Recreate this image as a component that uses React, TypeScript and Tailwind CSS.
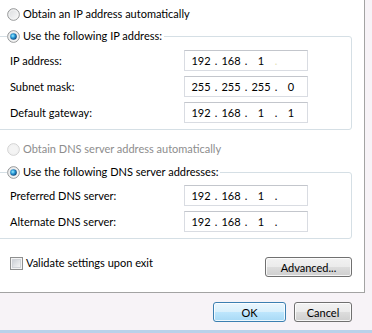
import React from "react";

const font = { fontFamily: 'Lato, "Noto Sans", sans-serif' };

function Radio({ checked = false, disabled = false }: { checked?: boolean; disabled?: boolean }) {
  return (
    <svg width="13" height="13" viewBox="0 0 13 13" className="shrink-0">
      <defs>
        <linearGradient id="rbg" x1="0" y1="0" x2="1" y2="1">
          <stop offset="0" stopColor="#d9dbdd" />
          <stop offset="1" stopColor="#fbfbfb" />
        </linearGradient>
        <radialGradient id="rdot" cx="0.4" cy="0.4" r="0.6">
          <stop offset="0" stopColor="#9ff0ff" />
          <stop offset="0.5" stopColor="#2a9ad8" />
          <stop offset="1" stopColor="#0f4a7e" />
        </radialGradient>
      </defs>
      <circle
        cx="6.5"
        cy="6.5"
        r="5.8"
        fill={disabled ? "#f4f4f4" : "url(#rbg)"}
        stroke={disabled ? "#cfcfcf" : "#8f9192"}
        strokeWidth="1"
      />
      <circle cx="6.5" cy="6.5" r="4.6" fill="none" stroke={disabled ? "#f0f0f0" : "#f6f6f6"} strokeWidth="0.8" />
      {checked && <circle cx="6.5" cy="6.5" r="3.3" fill="url(#rdot)" />}
    </svg>
  );
}

function IpBox({ parts, faintLast = false }: { parts: string[]; faintLast?: boolean }) {
  return (
    <div className="w-[124px] h-[21px] border border-[#d9dce2] border-t-[#c3c6cc] bg-white flex items-center pl-[3px] text-[11px] leading-none text-black">
      {[0, 1, 2, 3].map((i) => (
        <React.Fragment key={i}>
          <span className="w-[26px] text-center">{parts[i] ?? ""}</span>
          {i < 3 && (
            <span className={`w-[4px] text-center ${faintLast && i === 2 ? "text-[#e4dfb8]" : ""}`}>.</span>
          )}
        </React.Fragment>
      ))}
    </div>
  );
}

function Row({ label, parts, faintLast }: { label: string; parts: string[]; faintLast?: boolean }) {
  return (
    <div className="flex items-center justify-between pl-[3px] pr-[43px]">
      <span className="text-black">{label}</span>
      <IpBox parts={parts} faintLast={faintLast} />
    </div>
  );
}

function WinButton({ children, primary = false, className = "" }: { children: React.ReactNode; primary?: boolean; className?: string }) {
  return (
    <button
      className={`h-[20px] rounded-[3px] border text-[11px] leading-none text-black shadow-[inset_0_0_0_1px_rgba(255,255,255,0.8)] ${
        primary
          ? "border-[#3c7fb1] bg-[linear-gradient(#eaf6fd_0%,#d9f0fc_50%,#bee6fd_50%,#a7d9f5_100%)]"
          : "border-[#707070] bg-[linear-gradient(#f2f2f2_0%,#ebebeb_50%,#dddddd_50%,#cfcfcf_100%)]"
      } ${className}`}
    >
      {children}
    </button>
  );
}

export default function App() {
  return (
    <div className="w-[372px] h-[333px] flex flex-col bg-[#f7f3f7] overflow-hidden" style={font}>
      <div className="h-[293px] w-[365px] bg-white border-r border-b border-[#a3a3a3] overflow-hidden flex flex-col pr-[12px] text-[11px] leading-[14px]">
        <div className="flex items-center gap-[3px] pl-[7px] pt-[7px] h-[21px]">
          <Radio />
          <span>Obtain an IP address automatically</span>
        </div>

        <fieldset className="mt-[8px] ml-[-3px] border border-[#d5dfe5] rounded-[3px] pl-[9px] pt-[7px] pb-[6px]">
          <legend className="flex items-center gap-[3px] pr-[2px] h-[14px]">
            <Radio checked />
            <span>Use the following IP address:</span>
          </legend>
          <div className="flex flex-col gap-[5px]">
            <Row label="IP address:" parts={["192", "168", "1", ""]} faintLast />
            <Row label="Subnet mask:" parts={["255", "255", "255", "0"]} />
            <Row label="Default gateway:" parts={["192", "168", "1", "1"]} />
          </div>
        </fieldset>

        <div className="flex items-center gap-[3px] pl-[7px] mt-[12px] h-[14px] text-[#8d8d8d]">
          <Radio disabled />
          <span>Obtain DNS server address automatically</span>
        </div>

        <fieldset className="mt-[9px] ml-[-3px] border border-[#d5dfe5] rounded-[3px] pl-[9px] pt-[6px] pb-[6px]">
          <legend className="flex items-center gap-[3px] pr-[2px] h-[14px]">
            <Radio checked />
            <span>Use the following DNS server addresses:</span>
          </legend>
          <div className="flex flex-col gap-[5px]">
            <Row label="Preferred DNS server:" parts={["192", "168", "1", ""]} />
            <Row label="Alternate DNS server:" parts={["192", "168", "1", ""]} />
          </div>
        </fieldset>

        <div className="flex items-start justify-between mt-[18px]">
          <div className="flex items-center gap-[3px] pl-[10px] h-[14px] mt-[-1px]">
            <svg width="13" height="13" viewBox="0 0 13 13" className="shrink-0">
              <defs>
                <linearGradient id="cbg" x1="0" y1="0" x2="1" y2="1">
                  <stop offset="0" stopColor="#cbcfd5" />
                  <stop offset="1" stopColor="#f6f6f6" />
                </linearGradient>
              </defs>
              <rect x="0.5" y="0.5" width="12" height="12" fill="#f4f4f4" stroke="#8e8f8f" />
              <rect x="2.5" y="2.5" width="8" height="8" fill="url(#cbg)" stroke="#d0d3d8" />
            </svg>
            <span>Validate settings upon exit</span>
          </div>
          <WinButton className="w-[87px]">Advanced...</WinButton>
        </div>
      </div>

      <div className="flex justify-end gap-[8px] pr-[20px] pt-[9px]">
        <WinButton primary className="w-[73px]">OK</WinButton>
        <WinButton className="w-[58px]">Cancel</WinButton>
      </div>
      <div className="flex-1" />
      <div className="h-[3px] bg-[#b9d1ea]" />
    </div>
  );
}
